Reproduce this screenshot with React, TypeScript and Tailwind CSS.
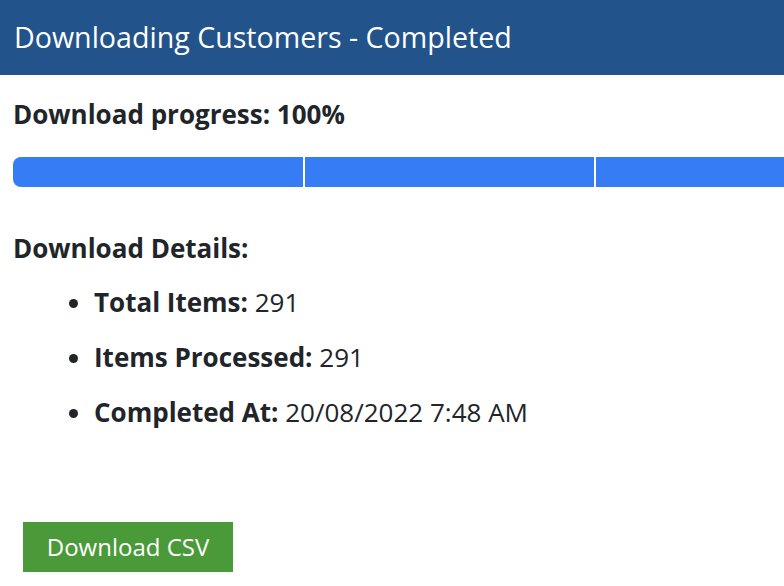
export default function App() {
  const items = [
    { label: "Total Items:", value: "291" },
    { label: "Items Processed:", value: "291" },
    { label: "Completed At:", value: "20/08/2022 7:48 AM" },
  ];
  return (
    <div className="w-[784px] h-[586px] overflow-hidden bg-white font-['Open_Sans',sans-serif] text-[#212529]">
      <div className="h-[75px] bg-[#22538a] flex items-center px-[14px]">
        <h1 className="text-[28.6px] text-white leading-none">Downloading Customers - Completed</h1>
      </div>
      <div className="px-[13px]">
        <p className="mt-[24px] text-[26px] font-bold leading-[30px]">Download progress: 100%</p>
        <div className="mt-[28px] flex gap-[2px] w-[900px] h-[30px]">
          <div className="w-[290px] bg-[#367cf5] rounded-l-[8px]"></div>
          <div className="w-[289px] bg-[#367cf5]"></div>
          <div className="w-[290px] bg-[#367cf5]"></div>
        </div>
        <p className="mt-[46px] text-[26px] font-bold leading-[30px]">Download Details:</p>
        <ul className="mt-[24px] list-disc pl-[81px] text-[26px] leading-[30px] flex flex-col gap-[25px]">
          {items.map((it) => (
            <li key={it.label}>
              <span className="font-bold">{it.label}</span> {it.value}
            </li>
          ))}
        </ul>
        <button className="mt-[95px] ml-[10px] w-[210px] h-[50px] bg-[#4a9a3a] text-white text-[24px]">
          Download CSV
        </button>
      </div>
    </div>
  );
}
